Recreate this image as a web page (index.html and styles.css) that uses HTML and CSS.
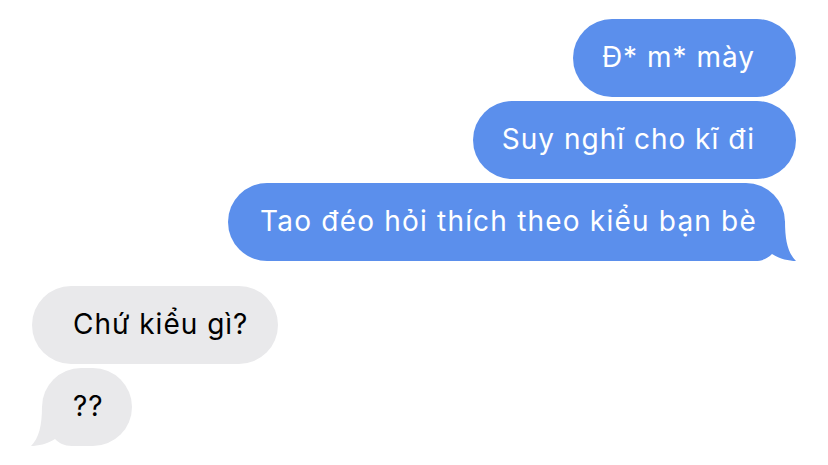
FILE: index.html
```html
<!DOCTYPE html>
<html lang="vi">
<head>
<meta charset="utf-8">
<title>Messages</title>
<link rel="stylesheet" href="styles.css">
</head>
<body>
<main class="thread">
  <section class="group group-sent">
    <div class="bubble sent"><span class="text">Đ* m* mày</span></div>
    <div class="bubble sent"><span class="text">Suy nghĩ cho kĩ đi</span></div>
    <div class="bubble sent tail"><span class="text text-long">Tao đéo hỏi thích theo kiểu bạn bè</span>
      <svg class="tail-shape" viewBox="0 0 52 40" width="52" height="40" aria-hidden="true"><path d="M0,0 H40 C40,20 43,32 51,40 C44,40 35,38 27,33 C23,37 18,40 10,40 H0 Z"/></svg>
    </div>
  </section>
  <section class="group group-received">
    <div class="bubble received"><span class="text">Chứ kiểu gì?</span></div>
    <div class="bubble received tail"><span class="text">??</span>
      <svg class="tail-shape" viewBox="0 0 52 40" width="52" height="40" aria-hidden="true"><path d="M0,0 H40 C40,20 43,32 51,40 C44,40 35,38 27,33 C23,37 18,40 10,40 H0 Z"/></svg>
    </div>
  </section>
</main>
</body>
</html>
```

FILE: styles.css
```css
html, body {
  margin: 0;
  padding: 0;
  background: #ffffff;
}

body {
  font-family: "Inter", "Liberation Sans", Arial, sans-serif;
  -webkit-font-smoothing: antialiased;
}

.thread {
  display: flex;
  flex-direction: column;
  gap: 25px;
  padding: 19px 32px 0 32px;
}

.group {
  display: flex;
  flex-direction: column;
  gap: 4px;
}

.group-sent {
  align-items: flex-end;
}

.group-received {
  align-items: flex-start;
}

.bubble {
  position: relative;
  z-index: 0;
  font-size: 28px;
  line-height: 34px;
  letter-spacing: 1px;
  padding: 21px 30px 23px 30px;
  border-radius: 39px;
  white-space: nowrap;
}

.text {
  position: relative;
}

.text-long {
  letter-spacing: 1.2px;
}

.sent {
  background: #5b8fec;
  color: #ffffff;
  padding-left: 29px;
  padding-right: 41px;
  fill: #5b8fec;
}

.sent.tail {
  margin-right: 11px;
  padding-left: 32px;
  padding-right: 28px;
}

.received {
  background: #e9e9eb;
  color: #000000;
  padding-left: 41px;
  padding-right: 30px;
  fill: #e9e9eb;
}

.received.tail {
  margin-left: 10px;
  padding-left: 31px;
  padding-right: 28px;
}

.tail-shape {
  position: absolute;
  bottom: 0;
  display: block;
  z-index: -1;
}

.sent .tail-shape {
  right: -12px;
}

.received .tail-shape {
  left: -12px;
  transform: scaleX(-1);
}
```
